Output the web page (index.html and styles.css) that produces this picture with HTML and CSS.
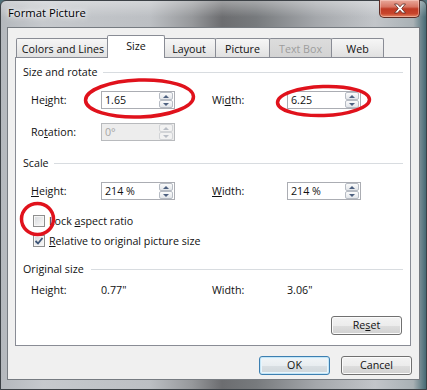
FILE: index.html
```html
<!DOCTYPE html>
<html>
<head>
<meta charset="utf-8">
<title>Format Picture</title>
<link rel="stylesheet" href="styles.css">
</head>
<body>
<div class="window">
  <div class="titlebar">
    <span class="title">Format Picture</span>
    <div class="close">
      <svg width="14" height="11" viewBox="0 0 14 11"><path d="M1.5 1 L4.5 1 L7 3.8 L9.5 1 L12.5 1 L8.7 5.5 L12.5 10 L9.5 10 L7 7.2 L4.5 10 L1.5 10 L5.3 5.5 Z" fill="#fff" stroke="#5b2a22" stroke-width="0.8" stroke-linejoin="round"/></svg>
    </div>
  </div>
  <div class="client">
    <div class="tabs">
      <div class="tab tab-colors">Colors and Lines</div>
      <div class="tab tab-size active">Size</div>
      <div class="tab tab-layout">Layout</div>
      <div class="tab tab-picture">Picture</div>
      <div class="tab tab-textbox disabled">Text Box</div>
      <div class="tab tab-web">Web</div>
    </div>
    <div class="panel">
      <div class="group-head">Size and rotate</div>
      <div class="row row-first">
        <span class="lbl">He<u>i</u>ght:</span>
        <div class="spin"><span class="val">1.65</span><span class="spin-btns"><span class="up"></span><span class="down"></span></span></div>
        <span class="lbl">Wi<u>d</u>th:</span>
        <div class="spin"><span class="val">6.25</span><span class="spin-btns"><span class="up"></span><span class="down"></span></span></div>
      </div>
      <div class="row row-rot">
        <span class="lbl">Ro<u>t</u>ation:</span>
        <div class="spin disabled"><span class="val">0°</span><span class="spin-btns"><span class="up"></span><span class="down"></span></span></div>
      </div>
      <div class="group-head group-scale">Scale</div>
      <div class="row row-first">
        <span class="lbl"><u>H</u>eight:</span>
        <div class="spin"><span class="val">214 %</span><span class="spin-btns"><span class="up"></span><span class="down"></span></span></div>
        <span class="lbl"><u>W</u>idth:</span>
        <div class="spin"><span class="val">214 %</span><span class="spin-btns"><span class="up"></span><span class="down"></span></span></div>
      </div>
      <label class="check-row check-lock"><span class="box"></span><span>Lock <u>a</u>spect ratio</span></label>
      <label class="check-row check-rel"><span class="box checked"><svg width="10" height="10" viewBox="0 0 10 10"><path d="M1.5 5 L4 7.5 L8.5 2" fill="none" stroke="#3d5476" stroke-width="1.8"/></svg></span><span><u>R</u>elative to original picture size</span></label>
      <div class="group-head group-orig">Original size</div>
      <div class="row row-orig">
        <span class="lbl">Height:</span>
        <span class="static">0.77"</span>
        <span class="lbl">Width:</span>
        <span class="static">3.06"</span>
      </div>
      <div class="reset-row"><button class="btn">Re<u>s</u>et</button></div>
    </div>
    <div class="buttons">
      <button class="btn default">OK</button>
      <button class="btn">Cancel</button>
    </div>
  </div>
</div>
<svg class="marks" width="427" height="390" viewBox="0 0 427 390">
  <ellipse cx="139.5" cy="98.5" rx="54" ry="18.5" transform="rotate(-2 139.5 98.5)" fill="none" stroke="#e0121c" stroke-width="3.5"/>
  <ellipse cx="323.5" cy="101" rx="46" ry="14.5" transform="rotate(-2 323.5 101)" fill="none" stroke="#e0121c" stroke-width="3.5"/>
  <ellipse cx="37.5" cy="219" rx="16" ry="15.5" fill="none" stroke="#e0121c" stroke-width="3.5"/>
</svg>
</body>
</html>
```
FILE: styles.css
```css
* { box-sizing: border-box; }
html, body { margin: 0; padding: 0; }
body {
  width: 427px;
  height: 390px;
  overflow: hidden;
  position: relative;
  font-family: "Open Sans", "Noto Sans", sans-serif;
  font-size: 10.7px;
  color: #111;
  background: #4f6f78;
}
u { text-decoration: underline; text-underline-offset: 1px; }

.window {
  width: 427px;
  height: 390px;
  border: 1px solid #3c4146;
  border-radius: 6px 6px 0 0;
  padding: 0 6px 9px 6px;
  display: flex;
  flex-direction: column;
  background:
    linear-gradient(180deg, rgba(255,255,255,0.35) 0px, rgba(255,255,255,0) 16px),
    linear-gradient(90deg, #b4b8bd 0%, #c6c9cd 10%, #bcbfc3 35%, #96989b 45%, #6c6d70 52%, #777a7d 60%, #a4a7ab 74%, #c2c5c9 88%, #a9b1b5 97%, #466a74 100%);
}

.titlebar {
  height: 26px;
  display: flex;
  justify-content: space-between;
  align-items: flex-start;
}
.title {
  padding: 4px 0 0 1px;
  font-size: 11.3px;
  color: #000;
  text-shadow: 0 0 6px #fff, 0 0 10px #fff, 0 0 3px #eef;
}
.close {
  width: 41px;
  height: 18px;
  margin-top: -1px;
  border: 1px solid #5e2c24;
  border-top: none;
  border-radius: 0 0 5px 5px;
  background: linear-gradient(180deg, #e9a89a 0%, #d77563 40%, #bf3a24 52%, #c8452c 80%, #e58a68 100%);
  box-shadow: inset 0 0 0 1px rgba(255,220,210,0.45);
  display: flex;
  align-items: center;
  justify-content: center;
}

.client {
  flex: 1;
  background: #f0f0f0;
  border: 1px solid #767b81;
  display: flex;
  flex-direction: column;
}

.tabs {
  margin-top: 7px;
  height: 22px;
  padding-left: 8px;
  display: flex;
  align-items: flex-end;
  position: relative;
  z-index: 1;
}
.tab {
  height: 19px;
  border: 1px solid #898c95;
  border-bottom: none;
  border-radius: 2px 2px 0 0;
  margin-left: -1px;
  background: linear-gradient(180deg, #f6f6f6 0%, #ececec 50%, #e0e0e0 100%);
  display: flex;
  align-items: center;
  justify-content: center;
  padding-top: 1px;
  white-space: nowrap;
}
.tab:first-child { margin-left: 0; }
.tab-colors { width: 94px; }
.tab-size { width: 58px; }
.tab-layout { width: 54px; }
.tab-picture { width: 55px; }
.tab-textbox { width: 63px; }
.tab-web { width: 53px; }
.tab.active {
  height: 23px;
  margin: 0 -2px -1px -3px;
  background: #fff;
  position: relative;
  z-index: 2;
  padding-top: 0;
  padding-bottom: 2px;
}
.tab.active + .tab { margin-left: -1px; }
.tab.disabled {
  color: #9d9d9d;
  background: linear-gradient(180deg, #dcdcdc 0%, #d3d3d3 100%);
}

.panel {
  height: 289px;
  margin: 0 8px 0 7px;
  border: 1px solid #898c95;
  background: #fff;
  padding: 6px 7px 10px 0;
  display: flex;
  flex-direction: column;
}

.group-head {
  height: 16px;
  display: flex;
  align-items: center;
  gap: 5px;
  padding-left: 7px;
  white-space: nowrap;
}
.group-head::after {
  content: "";
  flex: 1;
  border-top: 1px solid #d8dce0;
  margin-top: 1px;
}
.group-scale { margin-top: 14px; gap: 5px; }
.group-orig { margin-top: 12px; gap: 7px; }

.row {
  display: grid;
  grid-template-columns: 70px 111px 75px 75px;
  align-items: center;
  padding-left: 15px;
  height: 18px;
}
.row-first { margin-top: 11px; }
.row-rot { margin-top: 14px; }
.row-orig { margin-top: 4px; }
.static { padding-left: 0; }

.spin {
  width: 74px;
  height: 18px;
  border: 1px solid #abadb3;
  background: #fff;
  display: flex;
  align-items: center;
  padding-left: 3px;
}
.val { flex: 1; }
.spin-btns {
  width: 14px;
  height: 16px;
  margin-right: 1px;
  display: flex;
  flex-direction: column;
}
.spin-btns span {
  flex: 1;
  border: 1px solid #b7bcc4;
  border-radius: 2px;
  background: linear-gradient(180deg, #fbfbfb, #e3e6ea);
  display: flex;
  align-items: center;
  justify-content: center;
}
.up::after {
  content: "";
  border-left: 3px solid transparent;
  border-right: 3px solid transparent;
  border-bottom: 3px solid #4e6180;
}
.down::after {
  content: "";
  border-left: 3px solid transparent;
  border-right: 3px solid transparent;
  border-top: 3px solid #4e6180;
}
.spin.disabled {
  background: #ededed;
  border-color: #b8babd;
  color: #a5a5a5;
}
.spin.disabled .spin-btns span {
  border-color: #d2d4d7;
  background: #f2f2f2;
}
.spin.disabled .up::after { border-bottom-color: #b9bec6; }
.spin.disabled .down::after { border-top-color: #b9bec6; }

.check-row {
  display: flex;
  align-items: center;
  gap: 4px;
  height: 16px;
  padding-left: 17px;
}
.check-lock { margin-top: 13px; }
.check-rel { margin-top: 4px; }
.box {
  width: 12px;
  height: 12px;
  border: 1px solid #8e8f8f;
  background: linear-gradient(135deg, #d5d8dc 0%, #f4f4f4 80%);
  box-shadow: inset 0 0 0 1px #f6f6f6;
  display: flex;
  align-items: center;
  justify-content: center;
}
.box svg { display: block; }

.reset-row {
  margin-top: auto;
  display: flex;
  justify-content: flex-end;
  padding-right: 1px;
}

.btn {
  width: 71px;
  height: 19px;
  padding: 0;
  border: 1px solid #707070;
  border-radius: 3px;
  background: linear-gradient(180deg, #f3f3f3 0%, #ececec 50%, #dedede 51%, #d1d1d1 100%);
  box-shadow: inset 0 0 0 1px #fbfbfb;
  font-family: inherit;
  font-size: 10.7px;
  color: #111;
  line-height: 1;
}
.btn.default {
  border-color: #3c7fb1;
  box-shadow: inset 0 0 0 1px #c4e5f6, inset 0 0 0 2px #e8f5fc;
  background: linear-gradient(180deg, #f2f5f7 0%, #e8edf0 50%, #d9dfe3 51%, #cfd6da 100%);
}

.buttons {
  margin-top: 10px;
  display: flex;
  justify-content: flex-end;
  gap: 11px;
  padding-right: 7px;
}

.marks {
  position: absolute;
  top: 0;
  left: 0;
  pointer-events: none;
}
```
